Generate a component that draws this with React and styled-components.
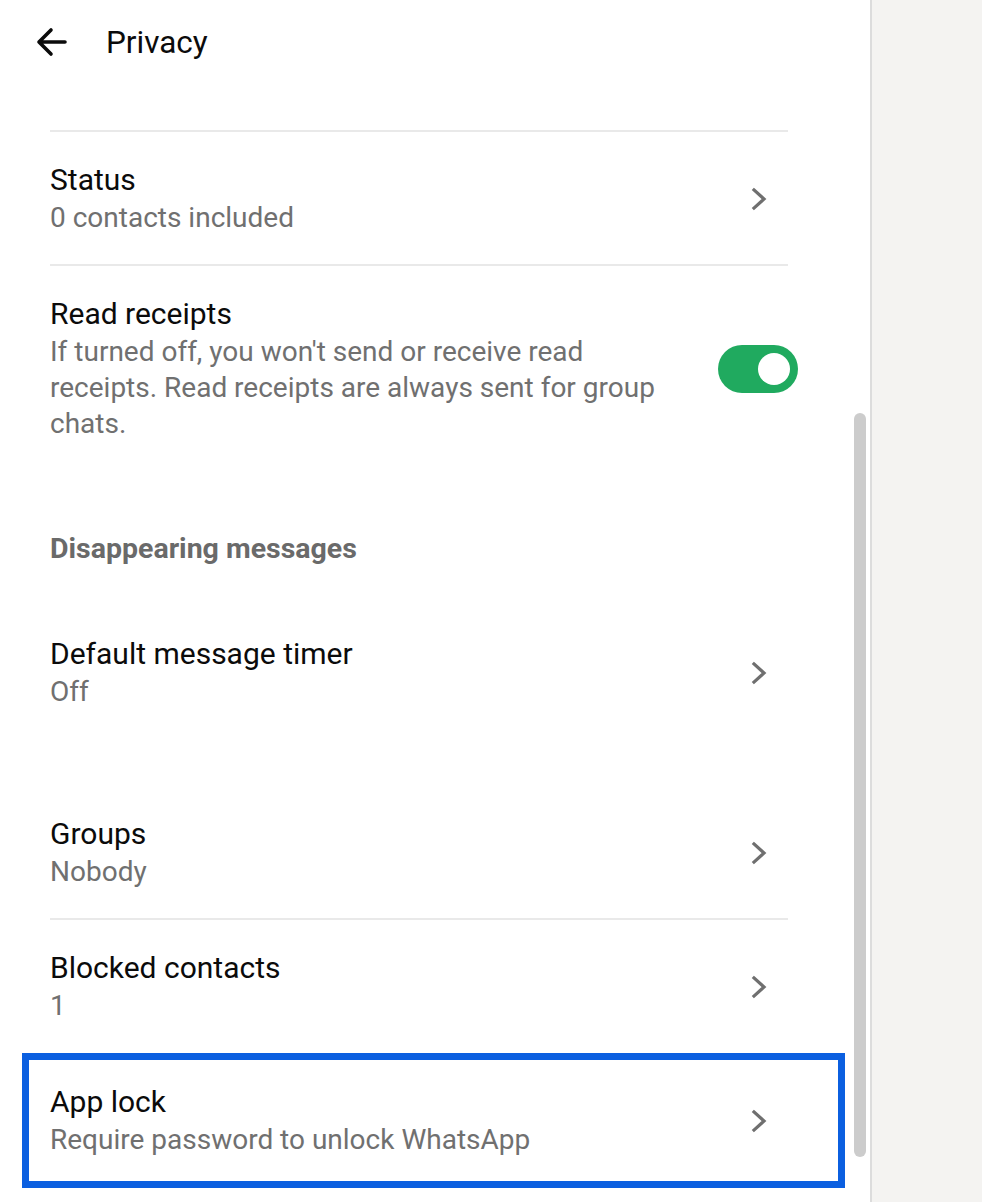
import React from 'react';
import styled, { createGlobalStyle } from "styled-components";

const GlobalStyle = createGlobalStyle`
    html, body {
        margin: 0;
        padding: 0;
        background: #ffffff;
    }
    body {
        font-family: Roboto, "Liberation Sans", sans-serif;
    }
`;

const Page = styled.div`
    display: flex;
    min-height: 100vh;
`;

const Panel = styled.div`
    position: relative;
    display: flex;
    flex-direction: column;
    width: 870px;
    background: #ffffff;
    border-right: 2px solid #dcdcdc;
`;

const SidePane = styled.div`
    flex: 1;
    background: #f4f3f1;
`;

const Header = styled.div`
    display: flex;
    align-items: center;
    height: 84px;
    padding-left: 35px;
    gap: 39px;
`;

const HeaderTitle = styled.div`
    font-size: 31.5px;
    color: #0b0b0b;
`;

const Divider = styled.div`
    height: 2px;
    margin: ${p => p.$top || 0}px 82px 0 50px;
    background: #e9e9e9;
`;

const Row = styled.div`
    display: flex;
    align-items: center;
    padding: ${p => p.$top}px ${p => p.$right || 72}px ${p => p.$bottom}px ${p => p.$left || 50}px;
`;

const RowText = styled.div`
    display: flex;
    flex-direction: column;
    flex: 1;
    min-width: 0;
`;

const Title = styled.div`
    font-size: 30px;
    line-height: 38px;
    color: #0b0b0b;
`;

const Sub = styled.div`
    margin-top: 1px;
    font-size: 28px;
    line-height: 36px;
    color: #707070;
    max-width: ${p => p.$max || 'none'};
`;

const SectionLabel = styled.div`
    padding: ${p => p.$top}px 0 ${p => p.$bottom}px 50px;
    font-size: 28.5px;
    line-height: 36px;
    font-weight: 700;
    color: #6a6a6a;
`;

const Chevron = styled.div`
    display: flex;
    margin-right: 31px;
`;

const Toggle = styled.div`
    display: flex;
    justify-content: flex-end;
    align-items: center;
    width: 80px;
    height: 48px;
    padding: 0 8px;
    box-sizing: border-box;
    border-radius: 24px;
    background: #20aa5f;
`;

const Knob = styled.div`
    width: 32px;
    height: 32px;
    border-radius: 50%;
    background: #ffffff;
`;

const Highlight = styled.div`
    width: 823px;
    margin: 1px 0 0 22px;
    box-sizing: border-box;
    border: 7px solid #0b5fe0;
`;

const ScrollThumb = styled.div`
    position: absolute;
    left: 854px;
    top: 413px;
    width: 12px;
    height: 744px;
    border-radius: 6px;
    background: #cccccc;
`;

function BackArrow() {
    return (
        <svg width="32" height="30" viewBox="0 0 32 30">
            <path d="M30 15H4 M16 3L4 15l12 12" fill="none" stroke="#0b0b0b" strokeWidth="3.6" strokeLinecap="round" strokeLinejoin="round" />
        </svg>
    );
}

function ChevronIcon() {
    return (
        <Chevron>
            <svg width="16" height="24" viewBox="0 0 16 24">
                <path d="M3 3l10 9-10 9" fill="none" stroke="#6f6f6f" strokeWidth="3.2" strokeLinecap="square" />
            </svg>
        </Chevron>
    );
}

function NavRow({ title, sub, top = 29, bottom = 28, left, right }) {
    return (
        <Row $top={top} $bottom={bottom} $left={left} $right={right}>
            <RowText>
                <Title>{title}</Title>
                <Sub>{sub}</Sub>
            </RowText>
            <ChevronIcon />
        </Row>
    );
}

export default function App() {
    return (
        <Page>
            <GlobalStyle />
            <Panel>
                <Header>
                    <BackArrow />
                    <HeaderTitle>Privacy</HeaderTitle>
                </Header>
                <Divider $top={46} />
                <NavRow title="Status" sub="0 contacts included" />
                <Divider />
                <Row $top={29} $bottom={0}>
                    <RowText>
                        <Title>Read receipts</Title>
                        <Sub $max="620px">
                            If turned off, you won't send or receive read receipts. Read receipts are always sent for group chats.
                        </Sub>
                    </RowText>
                    <Toggle>
                        <Knob />
                    </Toggle>
                </Row>
                <SectionLabel $top={89} $bottom={0}>Disappearing messages</SectionLabel>
                <NavRow title="Default message timer" sub="Off" top={68} bottom={0} />
                <NavRow title="Groups" sub="Nobody" top={105} bottom={28} />
                <Divider />
                <NavRow title="Blocked contacts" sub="1" />
                <Highlight>
                    <NavRow title="App lock" sub="Require password to unlock WhatsApp" top={23} bottom={23} left={21} right={40} />
                </Highlight>
                <ScrollThumb />
            </Panel>
            <SidePane />
        </Page>
    );
}
